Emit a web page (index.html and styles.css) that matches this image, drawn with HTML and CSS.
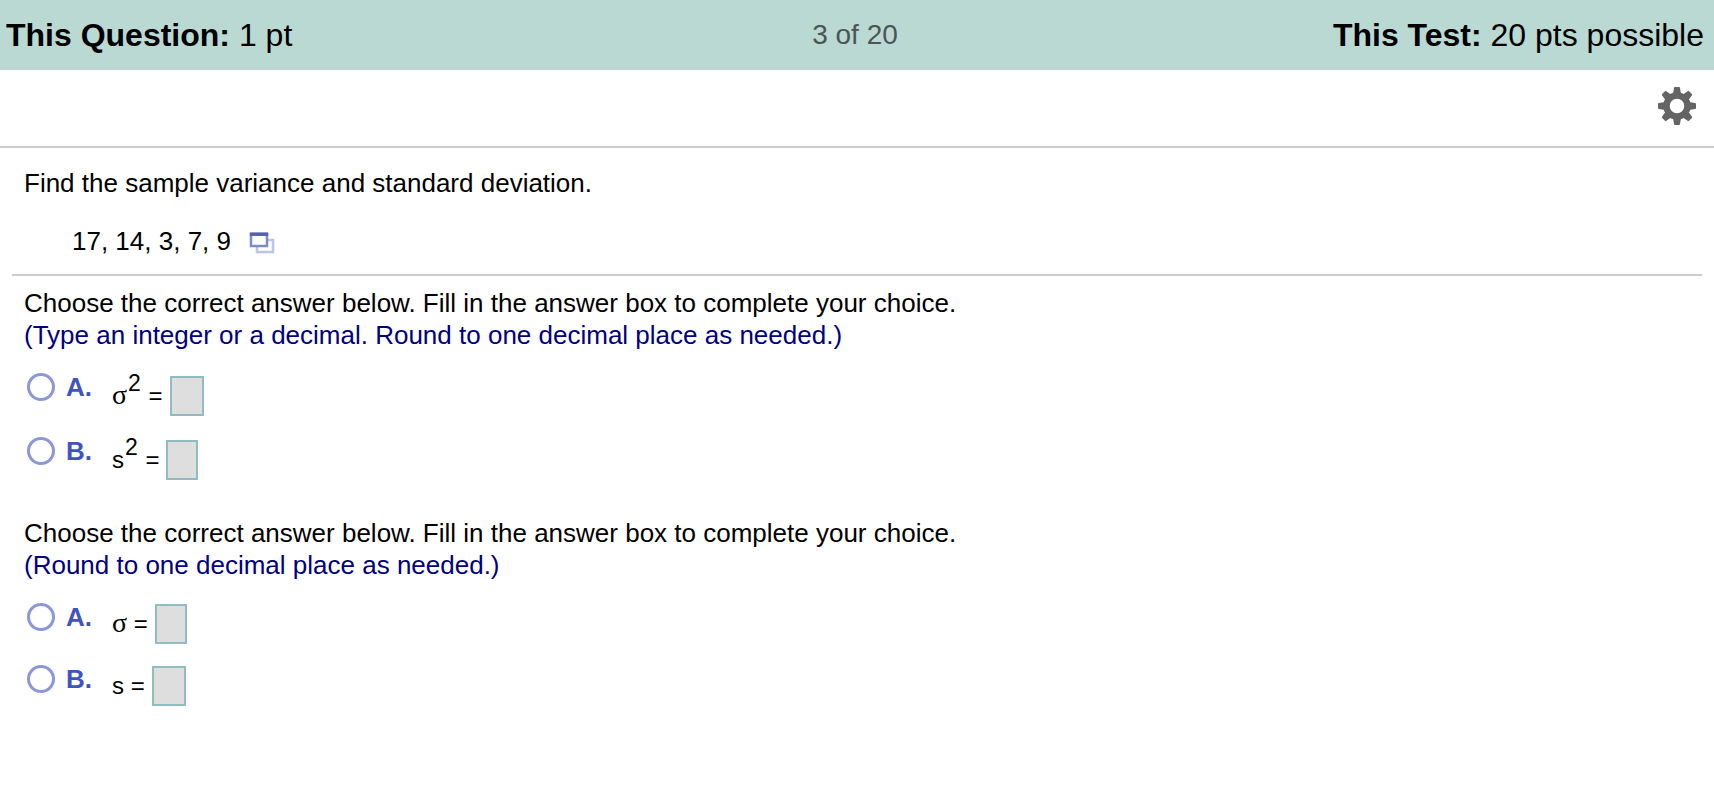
FILE: index.html
```html
<!DOCTYPE html>
<html lang="en">
<head>
    <meta charset="UTF-8">
    <meta name="viewport" content="width=device-width, initial-scale=1.0">
    <title>Question 3 of 20</title>
    <link rel="stylesheet" href="styles.css">
</head>
<body>
    <header class="test-header">
        <div class="question-points"><strong>This Question:</strong> 1 pt</div>
        <div class="progress">3 of 20</div>
        <div class="test-points"><strong>This Test:</strong> 20 pts possible</div>
    </header>

    <div class="toolbar">
        <button type="button" class="icon-button" aria-label="Settings">
            <svg width="38" height="38" viewBox="-19 -19 38 38">
                <defs>
                    <path id="tooth" d="M-4 -12 L-3 -18 Q-3 -19 -2 -19 H2 Q3 -19 3 -18 L4 -12 Z"/>
                    <path id="small-tooth" d="M-4 -12 L-3 -18 Q-3 -19 -2 -19 H2 Q3 -19 3 -18 L4 -12 Z"/>
                </defs>
                <g fill="#646464">
                    <use href="#tooth"/>
                    <use href="#tooth" transform="rotate(90)"/>
                    <use href="#tooth" transform="rotate(180)"/>
                    <use href="#tooth" transform="rotate(270)"/>
                    <use href="#small-tooth" transform="rotate(45)"/>
                    <use href="#small-tooth" transform="rotate(135)"/>
                    <use href="#small-tooth" transform="rotate(225)"/>
                    <use href="#small-tooth" transform="rotate(315)"/>
                </g>
                <circle r="10.5" fill="none" stroke="#646464" stroke-width="6.5"/>
            </svg>
        </button>
    </div>

    <main>
        <section class="question">
            <p>Find the sample variance and standard deviation.</p>
            <div class="data">
                <span>17, 14, 3, 7, 9</span>
                <button type="button" class="icon-button" aria-label="Copy data">
                    <svg width="26" height="26" viewBox="0 -4 26 26">
                        <rect x="8" y="8" width="16" height="12" fill="#fff" stroke="#bcc4e8" stroke-width="2.5"/>
                        <rect x="2" y="2" width="16" height="12" fill="#fff" stroke="#7e8bc9" stroke-width="2.5"/>
                        <path d="M0.8 2.2 H19.2" stroke="#5362ae" stroke-width="3.5"/>
                    </svg>
                </button>
            </div>
        </section>

        <form class="answers">
            <fieldset class="part">
                <legend>Choose the correct answer below. Fill in the answer box to complete your choice.</legend>
                <p class="hint">(Type an integer or a decimal. Round to one decimal place as needed.)</p>
                <div class="choices">
                    <div class="choice">
                        <input type="radio" id="variance-a" name="variance">
                        <label class="letter" for="variance-a">A.</label>
                        <div class="equation squared">
                            <label for="sigma-squared"><span class="greek">σ</span><sup>2</sup> =</label>
                            <input type="text" class="answer wide" id="sigma-squared">
                        </div>
                    </div>
                    <div class="choice">
                        <input type="radio" id="variance-b" name="variance">
                        <label class="letter" for="variance-b">B.</label>
                        <div class="equation squared">
                            <label for="s-squared">s<sup>2</sup> =</label>
                            <input type="text" class="answer" id="s-squared">
                        </div>
                    </div>
                </div>
            </fieldset>

            <fieldset class="part">
                <legend>Choose the correct answer below. Fill in the answer box to complete your choice.</legend>
                <p class="hint">(Round to one decimal place as needed.)</p>
                <div class="choices">
                    <div class="choice">
                        <input type="radio" id="deviation-a" name="deviation">
                        <label class="letter" for="deviation-a">A.</label>
                        <div class="equation">
                            <label for="sigma"><span class="greek">σ</span> =</label>
                            <input type="text" class="answer" id="sigma">
                        </div>
                    </div>
                    <div class="choice">
                        <input type="radio" id="deviation-b" name="deviation">
                        <label class="letter" for="deviation-b">B.</label>
                        <div class="equation">
                            <label for="s">s =</label>
                            <input type="text" class="answer wide" id="s">
                        </div>
                    </div>
                </div>
            </fieldset>
        </form>
    </main>
</body>
</html>
```
FILE: styles.css
```css
* {
    box-sizing: border-box;
}
body {
    margin: 0;
    font-family: "Liberation Sans", Arial, sans-serif;
    font-size: 26px;
    line-height: 32px;
    color: #000;
    background-color: #fff;
}
p {
    margin: 0;
}
.test-header {
    display: grid;
    grid-template-columns: 1fr auto 1fr;
    align-items: center;
    height: 70px;
    padding: 0 10px 0 6px;
    background-color: #bad9d3;
    border-bottom: 1px solid #c4d6d1;
    font-size: 32px;
}
.progress {
    font-size: 28px;
    color: #4a5553;
}
.test-points {
    text-align: right;
}
.toolbar {
    display: flex;
    justify-content: flex-end;
    align-items: center;
    height: 78px;
    padding: 0 18px 4px;
    border-bottom: 2px solid #c8cecd;
}
.icon-button {
    display: flex;
    padding: 0;
    border: none;
    background: none;
    cursor: pointer;
}
main {
    padding: 0 12px;
}
.question {
    padding: 19px 12px 17px;
    border-bottom: 2px solid #c8cecd;
}
.data {
    display: flex;
    align-items: center;
    gap: 18px;
    margin-top: 26px;
    padding-left: 48px;
}
.answers {
    display: flex;
    flex-direction: column;
    gap: 37px;
    padding: 11px 12px;
}
.part {
    min-width: 0;
    margin: 0;
    padding: 0;
    border: none;
}
legend {
    padding: 0;
}
.hint {
    color: #000080;
}
.choices {
    display: flex;
    flex-direction: column;
    gap: 21px;
    padding-top: 22px;
}
.choice {
    display: grid;
    grid-template-columns: 30px 46px auto;
    column-gap: 6px;
    justify-content: start;
    align-items: start;
}
input[type="radio"] {
    appearance: none;
    width: 28px;
    height: 28px;
    margin: 0 0 0 3px;
    border: 3px solid #8b97d9;
    border-radius: 50%;
    background-color: #fff;
}
input[type="radio"]:checked {
    background-color: #3f55bd;
    box-shadow: inset 0 0 0 4px #fff;
}
.letter {
    line-height: 28px;
    padding-left: 6px;
    font-weight: bold;
    color: #3f55bd;
}
.equation {
    display: flex;
    align-items: center;
    gap: 7px;
    padding-top: 1px;
    font-size: 24px;
    line-height: 40px;
}
.equation.squared {
    padding-top: 3px;
}
.greek {
    font-family: "Liberation Serif", "Times New Roman", serif;
    font-size: 28px;
    line-height: 1;
}
sup {
    margin: 0 1px;
    font-size: 23px;
    line-height: 0;
    vertical-align: 13px;
}
.answer {
    width: 32px;
    height: 40px;
    padding: 0 4px;
    border: 2px solid #91bcc3;
    border-radius: 0;
    background-color: #dedede;
    font: inherit;
}
.answer.wide {
    width: 34px;
}
```
